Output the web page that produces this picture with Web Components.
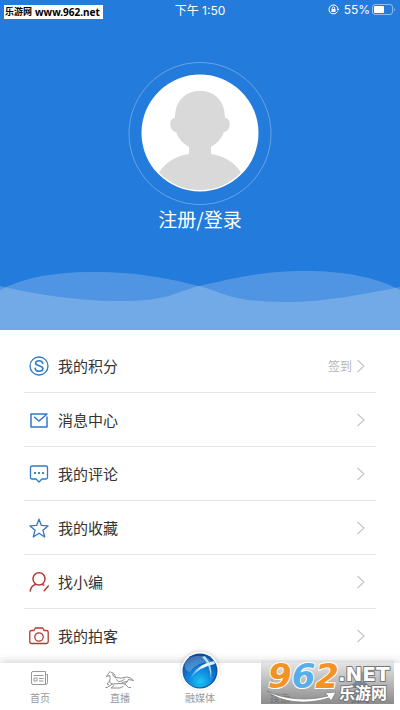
<!DOCTYPE html>
<html lang="zh-CN">
<head>
<meta charset="utf-8">
<meta name="viewport" content="width=device-width, initial-scale=1">
<title>我的</title>
<style>
html, body { margin: 0; background: #fff; }
body { font-family: "Inter", "Noto Sans CJK SC", sans-serif; color: #333; }
</style>
</head>
<body>
<my-page></my-page>
<script>
const define = (name, html) => customElements.define(name, class extends HTMLElement {
  constructor() {
    super();
    const t = document.createElement('template');
    t.innerHTML = html;
    this.attachShadow({ mode: 'open' }).append(t.content.cloneNode(true));
  }
});

const line = (color, body, w = 1.3) =>
  `<svg width="20" height="20" viewBox="0 0 20 20" fill="none" stroke="${color}" stroke-width="${w}" stroke-linecap="round" stroke-linejoin="round" aria-hidden="true">${body}</svg>`;
const BLUE = '#3079c4', RED = '#b03a34';
const icons = {
  points: line(BLUE, '<circle cx="10" cy="10" r="9"/><path d="M13.7 7.2C13.3 5.5 12 4.7 10.2 4.7 8.100 4.700 6.600 5.700 6.600 7.300 6.600 10.500 13.900 8.900 13.900 12.600 13.900 14.300 12.300 15.300 10.200 15.300 8 15.300 6.400 14.300 6.200 12.400" stroke-width="1.6"/>'),
  mail: line(BLUE, '<path d="M18 7v10H2V4h16L10 11 5.500 7.200" stroke-width="1.5"/>'),
  comment: line(BLUE, '<path d="M3 2h14q1.500 0 1.500 1.500v10q0 1.500-1.500 1.500h-4l-3 3-3-3H3q-1.500 0-1.500-1.500v-10Q1.500 2 3 2Z"/><path d="M5.800 9h.4m3.600 0h.4m3.600 0h.4" stroke-width="2"/>'),
  star: line(BLUE, '<path d="M10 1.200l2.400 6.200 6.600.5-5.100 4.300 1.800 6.800L10 15.200 4.300 19l1.800-6.800L1 7.900l6.600-.5Z"/>'),
  editor: line(RED, '<path d="M10 .8c3.500 0 6 2.600 6 5.900 0 3.500-2.700 6.300-6 6.300S4 10.200 4 6.700C4 3.400 6.500.8 10 .8ZM7 12.300c-3 .8-5.200 3.400-5.800 6.700M13 12.300l1.800.9M19.300 14l-4 4.800" stroke-width="1.5"/>'),
  camera: line(RED, '<path d="M2.500 4.500H5L6.300 2h7.400L15 4.500h2.500q1.700 0 1.700 1.700v9.600q0 1.700-1.700 1.700h-15Q.8 17.500.8 15.800V6.200Q.8 4.500 2.500 4.500Z"/><circle cx="10" cy="11" r="4.200"/>')
};

define('status-bar', `
<style>
:host { display: grid; grid-template-columns: 1fr auto 1fr; align-items: center; height: 19px; color: #fff; font-size: 12px; }
.right { display: flex; justify-content: flex-end; align-items: center; gap: 2px; padding-right: 4px; }
.site { justify-self: start; display: flex; align-items: center; gap: 3px; height: 14px; margin: 5px 0 0 4px; padding: 0 3px 0 1px; background: #fff; color: #000; font: bold 9px/14px "Noto Sans CJK SC", sans-serif; white-space: nowrap; align-self: start; }
.url { font: bold 10px/14px "Noto Sans", sans-serif; }
.lock { margin-right: 3px; }
</style>
<div class="site"><span>乐游网</span><span class="url">www.962.net</span></div>
<span>下午 1:50</span>
<div class="right">
  <svg class="lock" width="11" height="11" viewBox="0 0 11 11" fill="none" stroke="#fff" aria-hidden="true"><path d="M9.500 7.500A4.500 4.500 0 1 1 10 5.500" /><path d="M8.800 5h2.400L10 6.800Z" fill="#fff" stroke="none"/><path d="M3.500 5h4v3h-4Z" fill="#fff" stroke="none"/><path d="M4.300 5.200V4.100a1.200 1.200 0 0 1 2.400 0v1.100" stroke-width=".9"/></svg>
  <span>55%</span>
  <svg width="24" height="11" viewBox="0 0 24 11" aria-hidden="true"><rect x=".5" y=".5" width="20" height="10" rx="2.500" fill="none" stroke="#fff" stroke-opacity=".5"/><rect x="2" y="2" width="10" height="7" rx="1" fill="#fff"/><path d="M22 3.500q1.500 2 0 4Z" fill="#fff" fill-opacity=".6"/></svg>
</div>`);

define('profile-header', `
<style>
:host { display: flex; flex-direction: column; background: #237bdc; color: #fff; }
button { display: flex; flex-direction: column; align-items: center; align-self: center; margin: 43px 0 0; padding: 0; border: 0; background: none; color: inherit; font: 19px/26px "Noto Sans CJK SC", sans-serif; cursor: pointer; }
.wave { display: block; width: 100%; height: 60px; margin-top: 38px; }
</style>
<status-bar></status-bar>
<button type="button">
  <svg width="144" height="144" viewBox="0 0 144 144" aria-hidden="true">
    <defs><clipPath id="c"><circle cx="72" cy="71" r="57"/></clipPath></defs>
    <circle cx="72" cy="71.500" r="71" fill="none" stroke="#fff" stroke-opacity=".3"/>
    <circle cx="72" cy="71" r="58.500" fill="#fff"/>
    <path clip-path="url(#c)" fill="#d9d9d9" d="M72 29c-15 0-25 10-25 27-6-1-7 13 1 14 3 8 8 12 13 15v7c-13 2-24 8-30 19v23h82v-23c-6-11-17-17-30-19v-7c5-3 10-7 13-15 8-1 7-15 1-14C97 39 87 29 72 29Z"/>
  </svg>
  <span>注册/登录</span>
</button>
<svg class="wave" viewBox="0 0 400 60" preserveAspectRatio="none" fill="#fff" aria-hidden="true">
  <path fill-opacity=".2" d="M0 20C20 10 45 2 95 2 140 2 170 9 199 16 225 23 232 32 285 32 325 32 365 24 400 17V60H0Z"/>
  <path fill-opacity=".2" d="M0 16C35 24 75 31 118 31 170 31 172 23 199 16 230 9 260 1 305 1 350 1 380 9 400 20V60H0Z"/>
</svg>`);

define('menu-row', `
<style>
:host { display: block; padding: 0 24px; }
a { display: flex; align-items: center; height: 53px; padding: 0 11px 0 5px; border-bottom: 1px solid #e6e6e6; color: #333; text-decoration: none; font: 15px/24px "Noto Sans CJK SC", sans-serif; }
:host(:last-child) a { border-bottom-color: transparent; }
.label { flex: 1; margin-left: 9px; }
.note { margin-right: 4px; color: #b5b5b5; font-size: 12px; }
</style>
<a href="#"><slot name="icon"></slot><span class="label"><slot></slot></span><span class="note"><slot name="note"></slot></span>
<svg width="9" height="14" viewBox="0 0 9 14" fill="none" stroke="#c4c4c4" stroke-width="1.100" aria-hidden="true"><path d="M1.500 1 8 7l-6.500 6"/></svg></a>`);

define('tab-item', `
<style>
:host { flex: 1; }
a { display: flex; flex-direction: column; align-items: center; justify-content: flex-end; height: 43px; color: #999; text-decoration: none; font: 10px/16px "Noto Sans CJK SC", sans-serif; }
::slotted(svg) { flex: none; }
</style>
<a href="#"><slot name="icon"></slot><slot></slot></a>`);

define('site-mark', `
<style>
:host { display: block; width: 133px; height: 44px; }
svg { display: block; overflow: visible; }
</style>
<svg width="133" height="44" viewBox="0 0 133 44">
  <defs><linearGradient id="g" x2="0" y2="1"><stop stop-color="#e2e2e2" stop-opacity=".7"/><stop offset="1" stop-color="#555" stop-opacity=".68"/></linearGradient></defs>
  <path fill="url(#g)" d="M0 0h133v44H0z"/>
  <path d="M6 31C24 40 48 41 67 36l-3-3 11-1-5 9-2-3C46 45 20 43 6 31Z" fill="#fff" stroke="#777" stroke-width=".7"/>
  <g font-family="DejaVu Sans" font-weight="bold" stroke="#fff" stroke-width="2" paint-order="stroke" stroke-linejoin="round">
    <text x="7" y="28" font-size="34" font-style="italic" fill="#f39324">9<tspan fill="#58aee8">6</tspan><tspan>2</tspan></text>
    <text x="77" y="21" font-size="20" fill="#fff" stroke="#777">.NET</text>
    <text x="78" y="39" font-size="16" font-family="Noto Sans CJK SC" fill="#fff" stroke="#777">乐游网</text>
  </g>
</svg>`);

define('tab-bar', `
<style>
:host { position: relative; display: flex; height: 47px; background: #fff; box-shadow: 0 -1px 9px rgba(0,0,0,.2); }
svg { display: block; }
.ball { filter: drop-shadow(0 -1px 2px rgba(0,0,0,.16)); }
site-mark { position: absolute; right: 6px; bottom: 6px; }
.paper { margin-bottom: 4px; }
.me { color: #2c72b8; }
</style>
<tab-item><svg class="paper" slot="icon" width="20" height="16" viewBox="0 0 20 16" fill="none" stroke="#999" aria-hidden="true"><path d="M3 1.500h12.500v13H3q-1.500 0-1.500-1.500V3Q1.500 1.500 3 1.500ZM15.500 4.500h2v8q0 2-2 2M3.500 5.500h10M4 8h3v3H4ZM9 8.500h4.500M9 11h4.500"/></svg>首页</tab-item>
<tab-item><svg slot="icon" width="30" height="20" viewBox="0 0 30 20" fill="none" stroke="#8f8f8f" stroke-linecap="round" stroke-linejoin="round" aria-hidden="true"><path d="M1.500 6.500 3.500 3.500 5 1.500l1 1q4 0 4.500 5 5 1.500 11-.5 4 0 7 3.500l-5-1q-1 3-4 4.500M1.500 6.500l3-1q1.500 3 0 5.500 0 2 2.500 3l8-.5 5 .5 3.500 3.500h2M4.500 11 2 14l2 1M7.500 14 2 17.500H.800M9 15.500 6 18h9l3-1.500M10.500 7.500q-3-1-3-3.500M11 9.500q2 3.500 6 1.500l2.500-2M17 12.500l5-1"/></svg>直播</tab-item>
<tab-item><svg class="ball" slot="icon" width="38" height="38" viewBox="0 0 38 38" aria-hidden="true">
  <defs><radialGradient id="b" cx=".52" cy=".82" r=".8"><stop stop-color="#18c6f4"/><stop offset=".45" stop-color="#1185dc"/><stop offset="1" stop-color="#07459c"/></radialGradient><linearGradient id="s"><stop stop-color="#fff" stop-opacity=".1"/><stop offset=".5" stop-color="#fff"/><stop offset="1" stop-color="#bdeeff"/></linearGradient></defs>
  <circle cx="19" cy="19" r="19" fill="#fff"/><circle cx="19" cy="19" r="17.500" fill="#155297"/><circle cx="18.500" cy="19" r="16.500" fill="url(#b)"/>
  <path d="M4 11Q10 2 21 4q7 1 10 6Q16 9 9 20 2 18 4 11Z" fill="#fff" fill-opacity=".23"/>
  <path d="M9.500 26Q15 13 33 9l1 3Q20 14 9.500 26Z" fill="url(#s)"/><path d="M24 4q8 9 6 23Q29 12 21 5Z" fill="#cdf4ff" fill-opacity=".8"/>
</svg>融媒体</tab-item>
<tab-item><svg class="paper" slot="icon" width="20" height="16" viewBox="0 0 20 16" fill="none" stroke="#999" aria-hidden="true"><path d="M9 2H2v12h7"/></svg>搜索</tab-item>
<tab-item><svg slot="icon" width="20" height="20" viewBox="0 0 20 20" fill="#2c72b8" aria-hidden="true"><circle cx="10" cy="6" r="5"/><path d="M1 18q1-7 9-7t9 7Z"/></svg><span class="me">我的</span></tab-item>
<site-mark></site-mark>`);

define('my-page', `
<style>
:host { display: flex; flex-direction: column; min-height: 100vh; }
nav { flex: 1; padding-top: 9px; }
svg { display: block; flex: none; }
</style>
<profile-header></profile-header>
<nav>
<menu-row><span slot="icon">${icons.points}</span>我的积分<span slot="note">签到</span></menu-row>
<menu-row><span slot="icon">${icons.mail}</span>消息中心</menu-row>
<menu-row><span slot="icon">${icons.comment}</span>我的评论</menu-row>
<menu-row><span slot="icon">${icons.star}</span>我的收藏</menu-row>
<menu-row><span slot="icon">${icons.editor}</span>找小编</menu-row>
<menu-row><span slot="icon">${icons.camera}</span>我的拍客</menu-row>
</nav>
<tab-bar></tab-bar>`);
</script>
</body>
</html>
